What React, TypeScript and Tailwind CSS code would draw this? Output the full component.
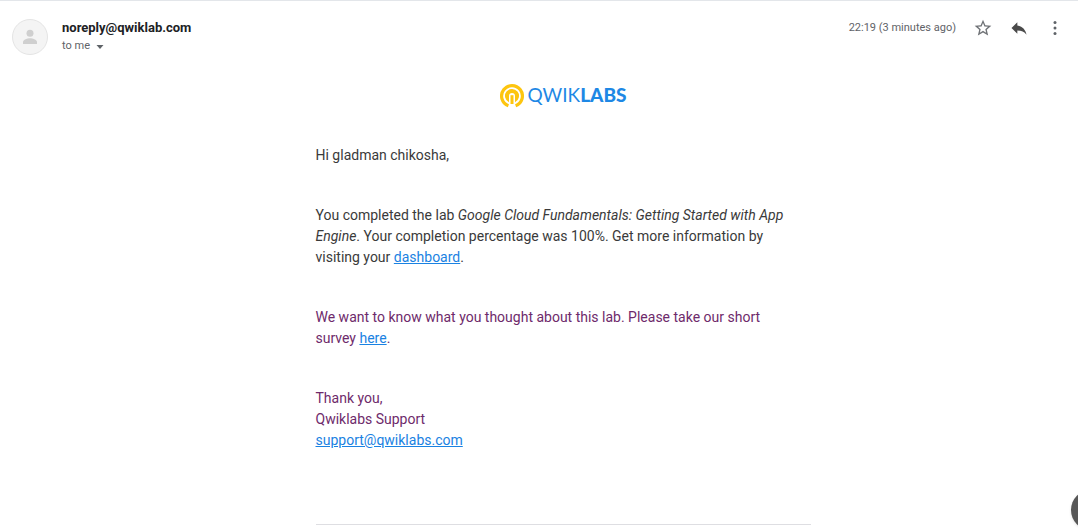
function Logo() {
  return (
    <div className="flex h-6 items-start justify-center gap-1">
      <svg viewBox="0 0 24 24" className="size-6" aria-hidden="true">
        <path d="M8.4 21.8 A10.4 10.4 0 1 1 15.6 21.8" fill="none" stroke="#fdc50f" strokeWidth="3.2" />
        <path d="M9 18.2 A7 7 0 1 1 15 18.2 V12 a3 3 0 0 0-6 0z" fill="#fdc50f" />
        <path d="M12 11.2v8.8" fill="none" stroke="#fdc50f" strokeWidth="3" />
      </svg>
      <span className="font-[Lato,sans-serif] text-[19px] leading-[22px] text-[#1e88e5]">
        QWIK<b className="font-black">LABS</b>
      </span>
    </div>
  );
}

function Header() {
  return (
    <header className="flex items-start justify-between border-t border-[#e3e6ea] pt-[18px] pr-[13px] pl-3">
      <div className="flex gap-3.5">
        <div className="flex size-9 items-center justify-center rounded-full border border-[#e4e4e4] bg-[#f4f4f4]">
          <svg viewBox="0 0 14 16" className="h-4 w-3.5" fill="#cfcfcf" aria-hidden="true">
            <circle cx="7" cy="4.2" r="3.5" />
            <path d="M0 15v-2c0-2.4 4.6-3.8 7-3.8s7 1.4 7 3.8v2z" />
          </svg>
        </div>
        <div>
          <h1 className="text-[13px] leading-[18px] font-bold text-[#202124]">noreply@qwiklab.com</h1>
          <button type="button" aria-label="Show details" className="flex items-center gap-1.5 text-[11px] leading-[18px] text-[#5f6368]">
            to me
            <svg viewBox="0 0 8 4" className="mt-0.5 h-1 w-2" fill="currentColor" aria-hidden="true">
              <path d="M.5 0h7L4 4z" />
            </svg>
          </button>
        </div>
      </div>
      <div className="flex h-[18px] items-center text-[#5f6368]">
        <time className="mr-[17px] text-[11px] leading-[18px]">22:19 (3 minutes ago)</time>
        <button type="button" aria-label="Star" className="mr-4">
          <svg viewBox="0 0 24 24" className="size-5" fill="#6f7276" aria-hidden="true">
            <path d="m22 9.24-7.19-.62L12 2 9.19 8.63 2 9.24l5.46 4.73L5.82 21 12 17.27 18.18 21l-1.63-7.03zM12 15.4l-3.76 2.27 1-4.28-3.32-2.88 4.38-.38L12 6.1l1.71 4.04 4.38.38-3.32 2.88 1 4.28z" />
          </svg>
        </button>
        <button type="button" aria-label="Reply" className="mr-4">
          <svg viewBox="0 0 24 24" className="size-5" fill="#4a4a4a" aria-hidden="true">
            <path d="M10 9V5l-7 7 7 7v-4.1c5 0 8.5 1.6 11 5.1-1-5-4-10-11-11z" />
          </svg>
        </button>
        <button type="button" aria-label="More">
          <svg viewBox="0 0 24 24" className="size-5" fill="#5f6368" aria-hidden="true">
            <circle cx="12" cy="5.5" r="1.8" />
            <circle cx="12" cy="12" r="1.8" />
            <circle cx="12" cy="18.5" r="1.8" />
          </svg>
        </button>
      </div>
    </header>
  );
}

const link = "text-[#1a82e2] underline";

export default function App() {
  return (
    <div className="relative min-h-screen overflow-hidden bg-white font-[Roboto,sans-serif]">
      <Header />
      <main className="pt-[29px] pr-3.5 pl-[62px]">
        <article className="mx-auto max-w-[495px] border-b border-[#dedee2] pb-[73px] text-sm leading-[21px] text-[#3a3a3a]">
          <Logo />
          <div className="mt-[37px] flex flex-col gap-[39px]">
            <p>Hi gladman chikosha,</p>
            <p>
              You completed the lab <em>Google Cloud Fundamentals: Getting Started with App Engine</em>. Your
              completion percentage was 100%. Get more information by visiting your{" "}
              <a href="#dashboard" className={link}>dashboard</a>.
            </p>
            <p className="text-[#6e2a6b]">
              We want to know what you thought about this lab. Please take our short survey&nbsp;
              <a href="#survey" className={link}>here</a>.
            </p>
            <p className="text-[#6e2a6b]">
              Thank you,
              <br />
              Qwiklabs Support
              <br />
              <a href="mailto:support@qwiklabs.com" className={link}>support@qwiklabs.com</a>
            </p>
          </div>
        </article>
      </main>
      <button type="button" aria-label="Open side panel" className="absolute -right-[33px] -bottom-px size-10 rounded-full bg-[#575757] shadow" />
    </div>
  );
}
